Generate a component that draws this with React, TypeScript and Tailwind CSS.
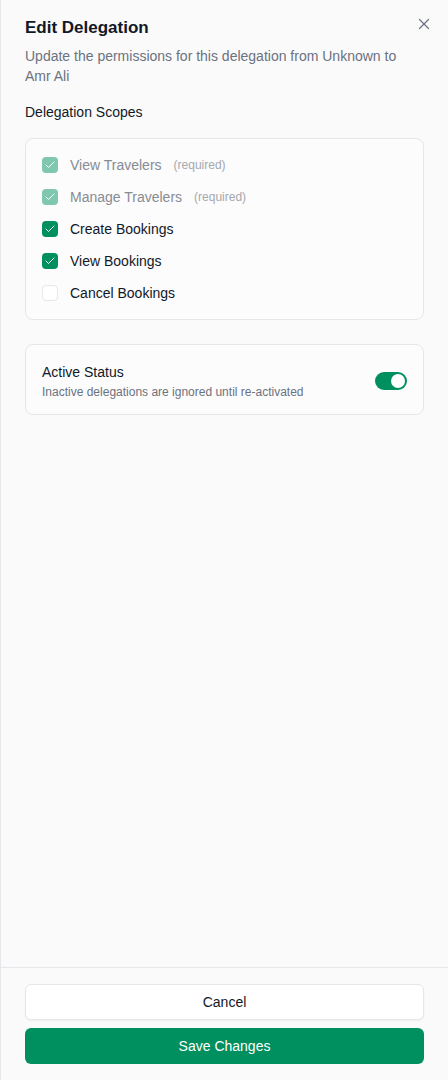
import { X, Check } from "lucide-react";

const scopes = [
  { label: "View Travelers", checked: true, required: true },
  { label: "Manage Travelers", checked: true, required: true },
  { label: "Create Bookings", checked: true, required: false },
  { label: "View Bookings", checked: true, required: false },
  { label: "Cancel Bookings", checked: false, required: false },
];

export default function App() {
  return (
    <div className="h-[1080px] w-[448px] bg-[#fafafa] border-l border-[#e5e7eb] flex flex-col text-[#111827] font-['Liberation_Sans',Arial,sans-serif]">
      <div className="flex-1 px-6 pt-4 relative">
        <button className="absolute right-[15px] top-[15px] text-[#6b7280]">
          <X size={18} strokeWidth={1.6} />
        </button>
        <h2 className="text-[17px] leading-6 font-bold">Edit Delegation</h2>
        <p className="mt-1.5 text-sm leading-5 text-[#6b7280] pr-4">
          Update the permissions for this delegation from Unknown to Amr Ali
        </p>

        <p className="mt-4 text-sm leading-5">Delegation Scopes</p>

        <div className="mt-4 rounded-lg border border-[#e5e7eb] bg-[#fcfcfc] p-4 flex flex-col gap-3">
          {scopes.map(s => (
            <div key={s.label} className="flex items-center h-5">
              {s.checked ? (
                <div className={`w-4 h-4 rounded-[4px] flex items-center justify-center ${s.required ? "bg-[#80c7af]" : "bg-[#008f5f]"}`}>
                  <Check size={12} strokeWidth={2} className="text-white" />
                </div>
              ) : (
                <div className="w-4 h-4 rounded-[4px] border border-[#e5e7eb] bg-white" />
              )}
              <span className={`ml-3 text-sm ${s.required ? "text-[#878b93]" : "text-[#111827]"}`}>{s.label}</span>
              {s.required && <span className="ml-3 text-xs text-[#a4a8af]">(required)</span>}
            </div>
          ))}
        </div>

        <div className="mt-6 rounded-lg border border-[#e5e7eb] bg-[#fcfcfc] px-4 pt-[17px] pb-[14px] flex items-center justify-between">
          <div>
            <p className="text-sm leading-5">Active Status</p>
            <p className="mt-[2px] text-xs leading-4 text-[#6b7280]">Inactive delegations are ignored until re-activated</p>
          </div>
          <div className="w-8 h-[18px] rounded-full bg-[#008f5f] p-[2px] flex justify-end">
            <div className="w-[14px] h-[14px] rounded-full bg-white" />
          </div>
        </div>
      </div>

      <div className="border-t border-[#e5e7eb] px-6 pt-4 pb-4 flex flex-col gap-2">
        <button className="h-9 w-full rounded-md border border-[#e5e7eb] bg-white text-sm text-[#111827] shadow-xs">
          Cancel
        </button>
        <button className="h-9 w-full rounded-md bg-[#008f5f] text-sm font-medium text-white">
          Save Changes
        </button>
      </div>
    </div>
  );
}
